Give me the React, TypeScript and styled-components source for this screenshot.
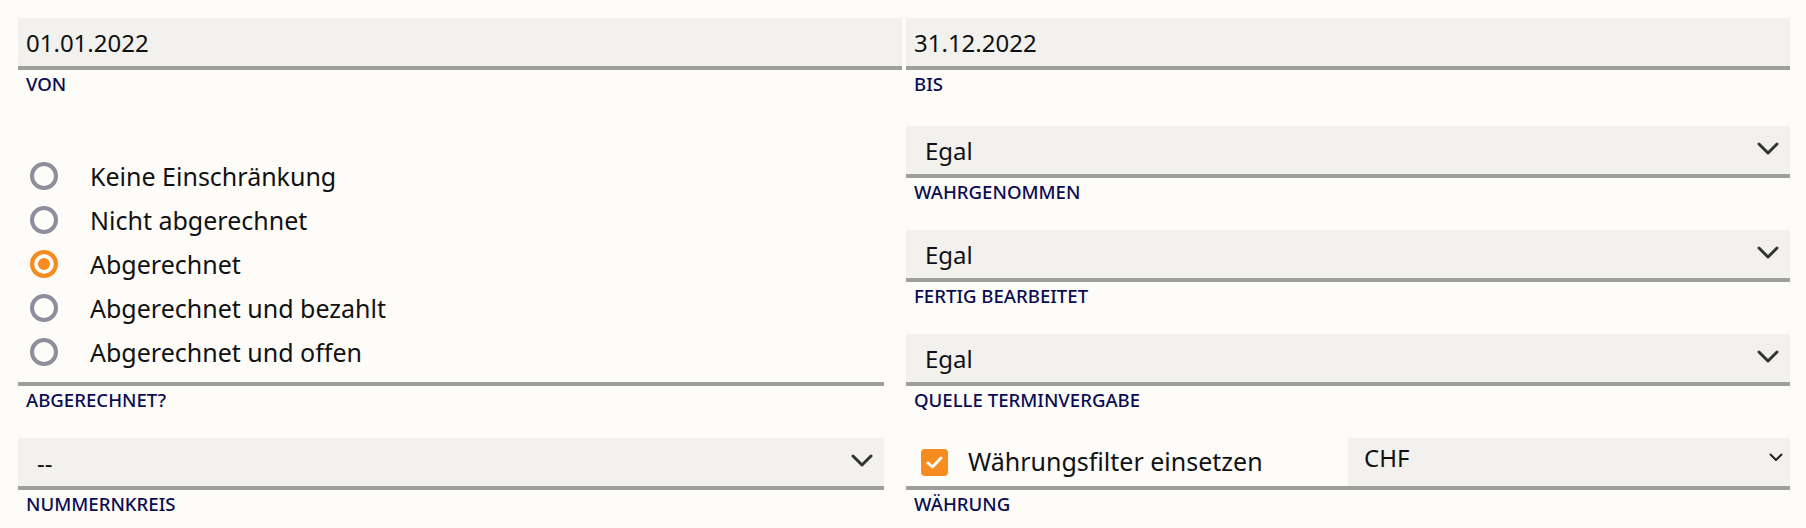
import React from "react";
import styled, { createGlobalStyle } from "styled-components";

const GlobalStyle = createGlobalStyle`
  html, body {
    margin: 0;
    padding: 0;
    background: #fdfcf9;
    font-family: "Noto Sans", "Open Sans", sans-serif;
    color: #111;
  }
  * { box-sizing: border-box; }
`;

const Page = styled.div`
  display: grid;
  grid-template-columns: 884px 884px;
  column-gap: 4px;
  padding: 18px 16px 0 18px;
  width: 1806px;
  height: 528px;
`;

const Column = styled.div`
  display: flex;
  flex-direction: column;
`;

const Field = styled.div<{ $gap?: number; $inset?: boolean }>`
  display: flex;
  flex-direction: column;
  margin-top: ${(p) => p.$gap ?? 0}px;
  margin-right: ${(p) => (p.$inset ? 18 : 0)}px;
`;

const Label = styled.div`
  margin-top: 2px;
  padding-left: 8px;
  height: 24px;
  line-height: 24px;
  font-size: 18.6px;
  font-weight: 500;
  color: #0b0b52;
  text-transform: uppercase;
  white-space: nowrap;
`;

const TextInput = styled.input`
  display: block;
  width: 100%;
  height: 52px;
  margin: 0;
  padding: 0 8px;
  border: none;
  border-bottom: 4px solid #9e9e9e;
  border-radius: 0;
  background: #f2f1ee;
  font-family: inherit;
  font-size: 24px;
  color: #111;
  outline: none;
`;

const SelectWrap = styled.div<{ $plain?: boolean }>`
  position: relative;
  height: ${(p) => (p.$plain ? 48 : 52)}px;
  background: #f2f1ee;
  border-bottom: ${(p) => (p.$plain ? "none" : "4px solid #9e9e9e")};
`;

const Select = styled.select<{ $pad?: number; $lift?: number }>`
  appearance: none;
  -webkit-appearance: none;
  display: block;
  width: 100%;
  height: 48px;
  margin: 0;
  padding: 0 40px ${(p) => p.$lift ?? 0}px ${(p) => p.$pad ?? 19}px;
  border: none;
  border-radius: 0;
  background: transparent;
  font-family: inherit;
  font-size: 24px;
  color: #111;
  outline: none;
`;

const Chevron = styled.svg<{ $right: number; $top: number }>`
  position: absolute;
  right: ${(p) => p.$right}px;
  top: ${(p) => p.$top}px;
  pointer-events: none;
`;

const RadioBox = styled.div`
  display: flex;
  flex-direction: column;
  padding: 28px 0 8px 12px;
  border-bottom: 4px solid #9e9e9e;
`;

const RadioRow = styled.label`
  display: flex;
  align-items: center;
  height: 44px;
  font-size: 25px;
  color: #111;
  cursor: pointer;
`;

const RadioInput = styled.input`
  appearance: none;
  -webkit-appearance: none;
  width: 28px;
  height: 28px;
  margin: 0 32px 0 0;
  border: 4px solid #8e8e9c;
  border-radius: 50%;
  background: #fdfcf9;
  flex: none;
  &:checked {
    border-color: #f68b1f;
    background: #f68b1f;
    box-shadow: inset 0 0 0 4px #fdfcf9;
  }
`;

const CurrencyRow = styled.div`
  display: grid;
  grid-template-columns: 442px 442px;
  border-bottom: 4px solid #9e9e9e;
`;

const CheckLabel = styled.label`
  display: flex;
  align-items: center;
  height: 48px;
  padding: 0 0 2px 15px;
  font-size: 25px;
  color: #111;
`;

const CheckBox = styled.span`
  display: flex;
  align-items: center;
  justify-content: center;
  width: 27px;
  height: 27px;
  margin: 2px 20px 0 0;
  border-radius: 4px;
  background: #f68b1f;
  flex: none;
`;

const BigChevron = () => (
  <Chevron $right={11} $top={16} width="22" height="14" viewBox="0 0 22 14">
    <path d="M2 2 L11 11 L20 2" fill="none" stroke="#333" strokeWidth="3" strokeLinecap="round" strokeLinejoin="round" />
  </Chevron>
);

const SmallChevron = () => (
  <Chevron $right={7} $top={15} width="14" height="9" viewBox="0 0 14 9">
    <path d="M1.5 1.5 L7 7 L12.5 1.5" fill="none" stroke="#222" strokeWidth="2" strokeLinecap="round" strokeLinejoin="round" />
  </Chevron>
);

const SelectField = ({ value, label, gap, inset }: { value: string; label: string; gap: number; inset?: boolean }) => (
  <Field $gap={gap} $inset={inset}>
    <SelectWrap>
      <Select defaultValue={value}>
        <option>{value}</option>
      </Select>
      <BigChevron />
    </SelectWrap>
    <Label>{label}</Label>
  </Field>
);

const radios = [
  "Keine Einschränkung",
  "Nicht abgerechnet",
  "Abgerechnet",
  "Abgerechnet und bezahlt",
  "Abgerechnet und offen",
];

export default function App() {
  return (
    <>
      <GlobalStyle />
      <Page>
        <Column>
          <Field>
            <TextInput readOnly value="01.01.2022" />
            <Label>Von</Label>
          </Field>
          <Field $gap={30} $inset>
            <RadioBox>
              {radios.map((r) => (
                <RadioRow key={r}>
                  <RadioInput type="radio" name="abg" defaultChecked={r === "Abgerechnet"} />
                  {r}
                </RadioRow>
              ))}
            </RadioBox>
            <Label>Abgerechnet?</Label>
          </Field>
          <SelectField value="--" label="Nummernkreis" gap={26} inset />
        </Column>
        <Column>
          <Field>
            <TextInput readOnly value="31.12.2022" />
            <Label>Bis</Label>
          </Field>
          <SelectField value="Egal" label="Wahrgenommen" gap={30} />
          <SelectField value="Egal" label="Fertig bearbeitet" gap={26} />
          <SelectField value="Egal" label="Quelle Terminvergabe" gap={26} />
          <Field $gap={26}>
            <CurrencyRow>
              <CheckLabel>
                <CheckBox>
                  <svg width="17" height="13" viewBox="0 0 17 13">
                    <path d="M2 7 L6.5 11 L15 2" fill="none" stroke="#fff" strokeWidth="3" strokeLinecap="round" strokeLinejoin="round" />
                  </svg>
                </CheckBox>
                Währungsfilter einsetzen
              </CheckLabel>
              <SelectWrap $plain>
                <Select $pad={16} $lift={10} defaultValue="CHF">
                  <option>CHF</option>
                </Select>
                <SmallChevron />
              </SelectWrap>
            </CurrencyRow>
            <Label>Währung</Label>
          </Field>
        </Column>
      </Page>
    </>
  );
}
